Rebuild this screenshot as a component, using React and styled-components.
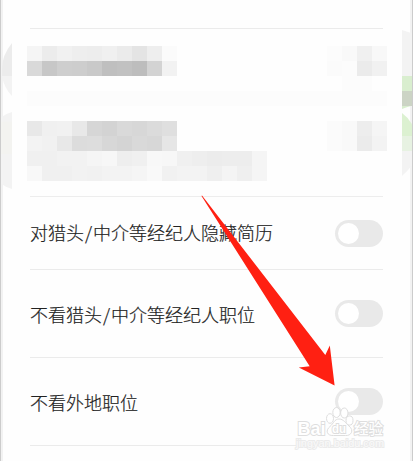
import React from 'react';
import styled, { createGlobalStyle } from 'styled-components';

const GlobalStyle = createGlobalStyle`
  * { box-sizing: border-box; }
  body { margin: 0; background: #fff; overflow: hidden; }
`;

const Screen = styled.main`
  position: relative;
  width: 413px;
  height: 461px;
  padding: 28px 28px 0 27px;
  overflow: hidden;
  background: #fefefe;
  border-left: 1px solid #ccc;
  border-right: 1px solid #ccc;
  box-shadow: inset 2px 0 #f2f2f2, inset -2px 0 #f2f2f2;
  font-family: 'Noto Sans CJK SC', sans-serif;
`;

const MaskedSection = styled.section`
  height: 169px;
  margin-left: 2px;
  width: 353px;
  border-top: 1px solid #ebebeb;
  border-bottom: 1px solid #ededed;
  padding-top: 17px;
`;

const MaskedEntry = styled.div`
  display: flex;
  justify-content: space-between;
  width: 360px;
  margin-left: -3px;
  height: ${(p) => p.$height}px;
`;

const Mosaic = styled.div`
  display: grid;
  grid-template-columns: repeat(${(p) => p.$columns}, 15px);
  grid-auto-rows: 15px;
`;

const Cell = styled.i`
  background: ${(p) => p.$color};
`;

const MaskedStrip = styled.div`
  width: 360px;
  height: 15px;
  margin: 0 0 15px -3px;
  background: #fcfcfc;
`;

const SettingRow = styled.label`
  display: flex;
  align-items: center;
  justify-content: space-between;
  width: 353px;
  height: ${(p) => p.$height}px;
  margin-left: 2px;
  border-bottom: 1px solid #ebebeb;
`;

const Label = styled.span`
  font-size: 18px;
  font-weight: 300;
  -webkit-text-stroke: 0.2px #222;
  line-height: 26px;
  padding-bottom: ${(p) => p.$lift}px;
  color: #222;
  white-space: nowrap;
`;

const Slash = styled.span`
  margin: 0 1px;
`;

const Toggle = styled.button`
  display: flex;
  align-items: center;
  width: 48px;
  height: 27px;
  padding: 0 0 0 3px;
  border: 0;
  border-radius: 14px;
  background: #e9e9e9;
`;

const Knob = styled.span`
  width: 21px;
  height: 21px;
  border-radius: 50%;
  background: #fff;
`;

const Overlay = styled.svg`
  position: absolute;
  top: 0;
  left: -1px;
  pointer-events: none;
`;

const Watermark = styled.g`
  font-family: 'Liberation Sans', 'Noto Sans CJK SC', sans-serif;
  fill: #fff;
  stroke: #dedede;
  stroke-width: 1px;
`;

const Brand = styled.text`
  font-size: ${(p) => p.$size}px;
  font-weight: ${(p) => p.$weight || 700};
  paint-order: stroke;
  stroke-width: 2px;
`;

const Address = styled.text`
  font-size: 10px;
  font-weight: 400;
  fill: #fafafa;
  stroke: #ebebeb;
  stroke-width: 1.8px;
  paint-order: stroke;
`;

const NAME_CELLS = ['#f5f5f5','#ececec','#f1f1f1','#eeeeee','#ededed','#f0f0f0','#ebebeb','#e4e4e4','#eeeeee','#fbfbfb',
  '#d9d9d9','#c7c7c7','#cecece','#cdcdcd','#c9c9c9','#bfbfbf','#c1c1c1','#bdbdbd','#d3d3d3','#f2f2f2'];
const VALUE_CELLS = ['#fcfcfc','#f9f9f9','#f0f0f0','#f8f8f8','#fbfbfb','#fcfcfc','#ebebeb','#f1f1f1',
  '#fefefe','#fcfcfc','#fcfcfc','#fefefe'];
const E = '#fefefe';
const DETAIL_CELLS = [
  '#e8e8e8','#f0f0f0','#f1f1f1','#e8e8e8','#d6d6d6','#d3d3d3','#d9d9d9','#d7d7d7','#dbdbdb','#dfdfdf',E,E,E,E,E,E,
  '#f3f3f3','#f1f1f1','#e8e8e8','#dcdcdc','#dddddd','#d7d7d7','#d4d4d4','#d9d9d9','#d7d7d7','#e6e6e6',E,E,E,E,E,E,
  '#f0f0f0','#f0f0f0','#f2f2f2','#f2f2f2','#f5f5f5','#f7f7f7','#eeeeee','#f0f0f0','#f8f8f8','#f7f7f7','#f0f0f0','#eeeeee','#ececec','#ededed','#ededed','#f5f5f5',
  '#f8f8f8','#f0f0f0','#f0f0f0','#f2f2f2','#f1f1f1','#f3f3f3','#f3f3f3','#f5f5f5','#f9f9f9','#f1f1f1','#f3f3f3','#f3f3f3','#efefef','#f4f4f4','#efefef','#f5f5f5',
];
const COUNT_CELLS = ['#fbfbfb','#f9f9f9','#ededed','#f5f5f5','#fbfbfb','#f9f9f9','#ebebeb','#f3f3f3'];

const SETTINGS = [
  { parts: ['对猎头', '中介等经纪人隐藏简历'], height: 73, lift: 2 },
  { parts: ['不看猎头', '中介等经纪人职位'], height: 88, lift: 0 },
  { parts: ['不看外地职位'], height: 88, lift: 0 },
];

function CellGrid({ columns, colors }) {
  return (
    <Mosaic $columns={columns}>
      {colors.map((color, i) => <Cell key={i} $color={color} />)}
    </Mosaic>
  );
}

export default function App() {
  return (
    <>
      <GlobalStyle />
      <Screen>
        <MaskedSection>
          <MaskedEntry $height={45}>
            <CellGrid columns={10} colors={NAME_CELLS} />
            <CellGrid columns={4} colors={VALUE_CELLS} />
          </MaskedEntry>
          <MaskedStrip />
          <MaskedEntry $height={60}>
            <CellGrid columns={16} colors={DETAIL_CELLS} />
            <CellGrid columns={4} colors={COUNT_CELLS} />
          </MaskedEntry>
        </MaskedSection>
        {SETTINGS.map(({ parts, height, lift }) => (
          <SettingRow key={parts[0]} $height={height}>
            <Label $lift={lift}>
              {parts[0]}{parts[1] && <><Slash>/</Slash>{parts[1]}</>}
            </Label>
            <Toggle type="button" role="switch" aria-checked="false" aria-label={parts.join('/')}><Knob /></Toggle>
          </SettingRow>
        ))}
        <Overlay width="413" height="461" viewBox="0 0 413 461" aria-hidden="true">
          <path d="M12 43Q2 55 2 69V76H12Z" fill="#ececec" />
          <path d="M2 76H12V96Q4 88 2 76Z" fill="#f3f3f3" />
          <path d="M12 112Q5 114 0 118V183Q5 187 12 189Z" fill="#f3f3f3" />
          <path d="M0 121.500H12V154H0Z" fill="#f3f3f0" />
          <path d="M402 30L413 33.500V76H402Z" fill="#f3f3f3" />
          <path d="M402 76H413V91H402Z" fill="#d9eecf" />
          <path d="M402 91H413V106H402Z" fill="#ccd4c5" />
          <path d="M402 106H411Q407 107 402 109Z" fill="#d9eecf" />
          <path d="M402 113Q409 118 413 126V136H402Z" fill="#dcf1d1" />
          <path d="M402 136H413V151H402Z" fill="#e7f2e2" />
          <path d="M402 151H413V164Q408 171 402 176Z" fill="#f3f3f3" />
          <path d="M202 195.500L325.300 355L329.800 345.500L334.600 385.500L298.800 367.500L309.700 366.300L201.500 196Z" fill="#ff2012" />
          <Watermark>
            <Brand $size={19} x="297.500" y="434.500" textLength="28" lengthAdjust="spacingAndGlyphs">Bai</Brand>
            <path d="M339 419C343.500 419 345.500 423 349 426C354.500 430.500 351 436 345.500 435.500H333.500C327 436 325 430.500 330 426.500C333.500 423.500 334.500 419 339 419Z" />
            <ellipse cx="330" cy="418.500" rx="3.500" ry="4.800" />
            <ellipse cx="336.500" cy="412.500" rx="3.700" ry="5" />
            <ellipse cx="344.300" cy="413" rx="3.700" ry="5" />
            <ellipse cx="349.500" cy="420.500" rx="3.500" ry="4.600" />
            <Brand $size={13} x="332" y="433" textLength="14" lengthAdjust="spacingAndGlyphs">du</Brand>
            <Brand $size={15} $weight={500} x="354" y="433.500" textLength="29" lengthAdjust="spacingAndGlyphs">经验</Brand>
            <Address x="296" y="446.500" textLength="88" lengthAdjust="spacingAndGlyphs">jingyan.baidu.com</Address>
          </Watermark>
        </Overlay>
      </Screen>
    </>
  );
}
